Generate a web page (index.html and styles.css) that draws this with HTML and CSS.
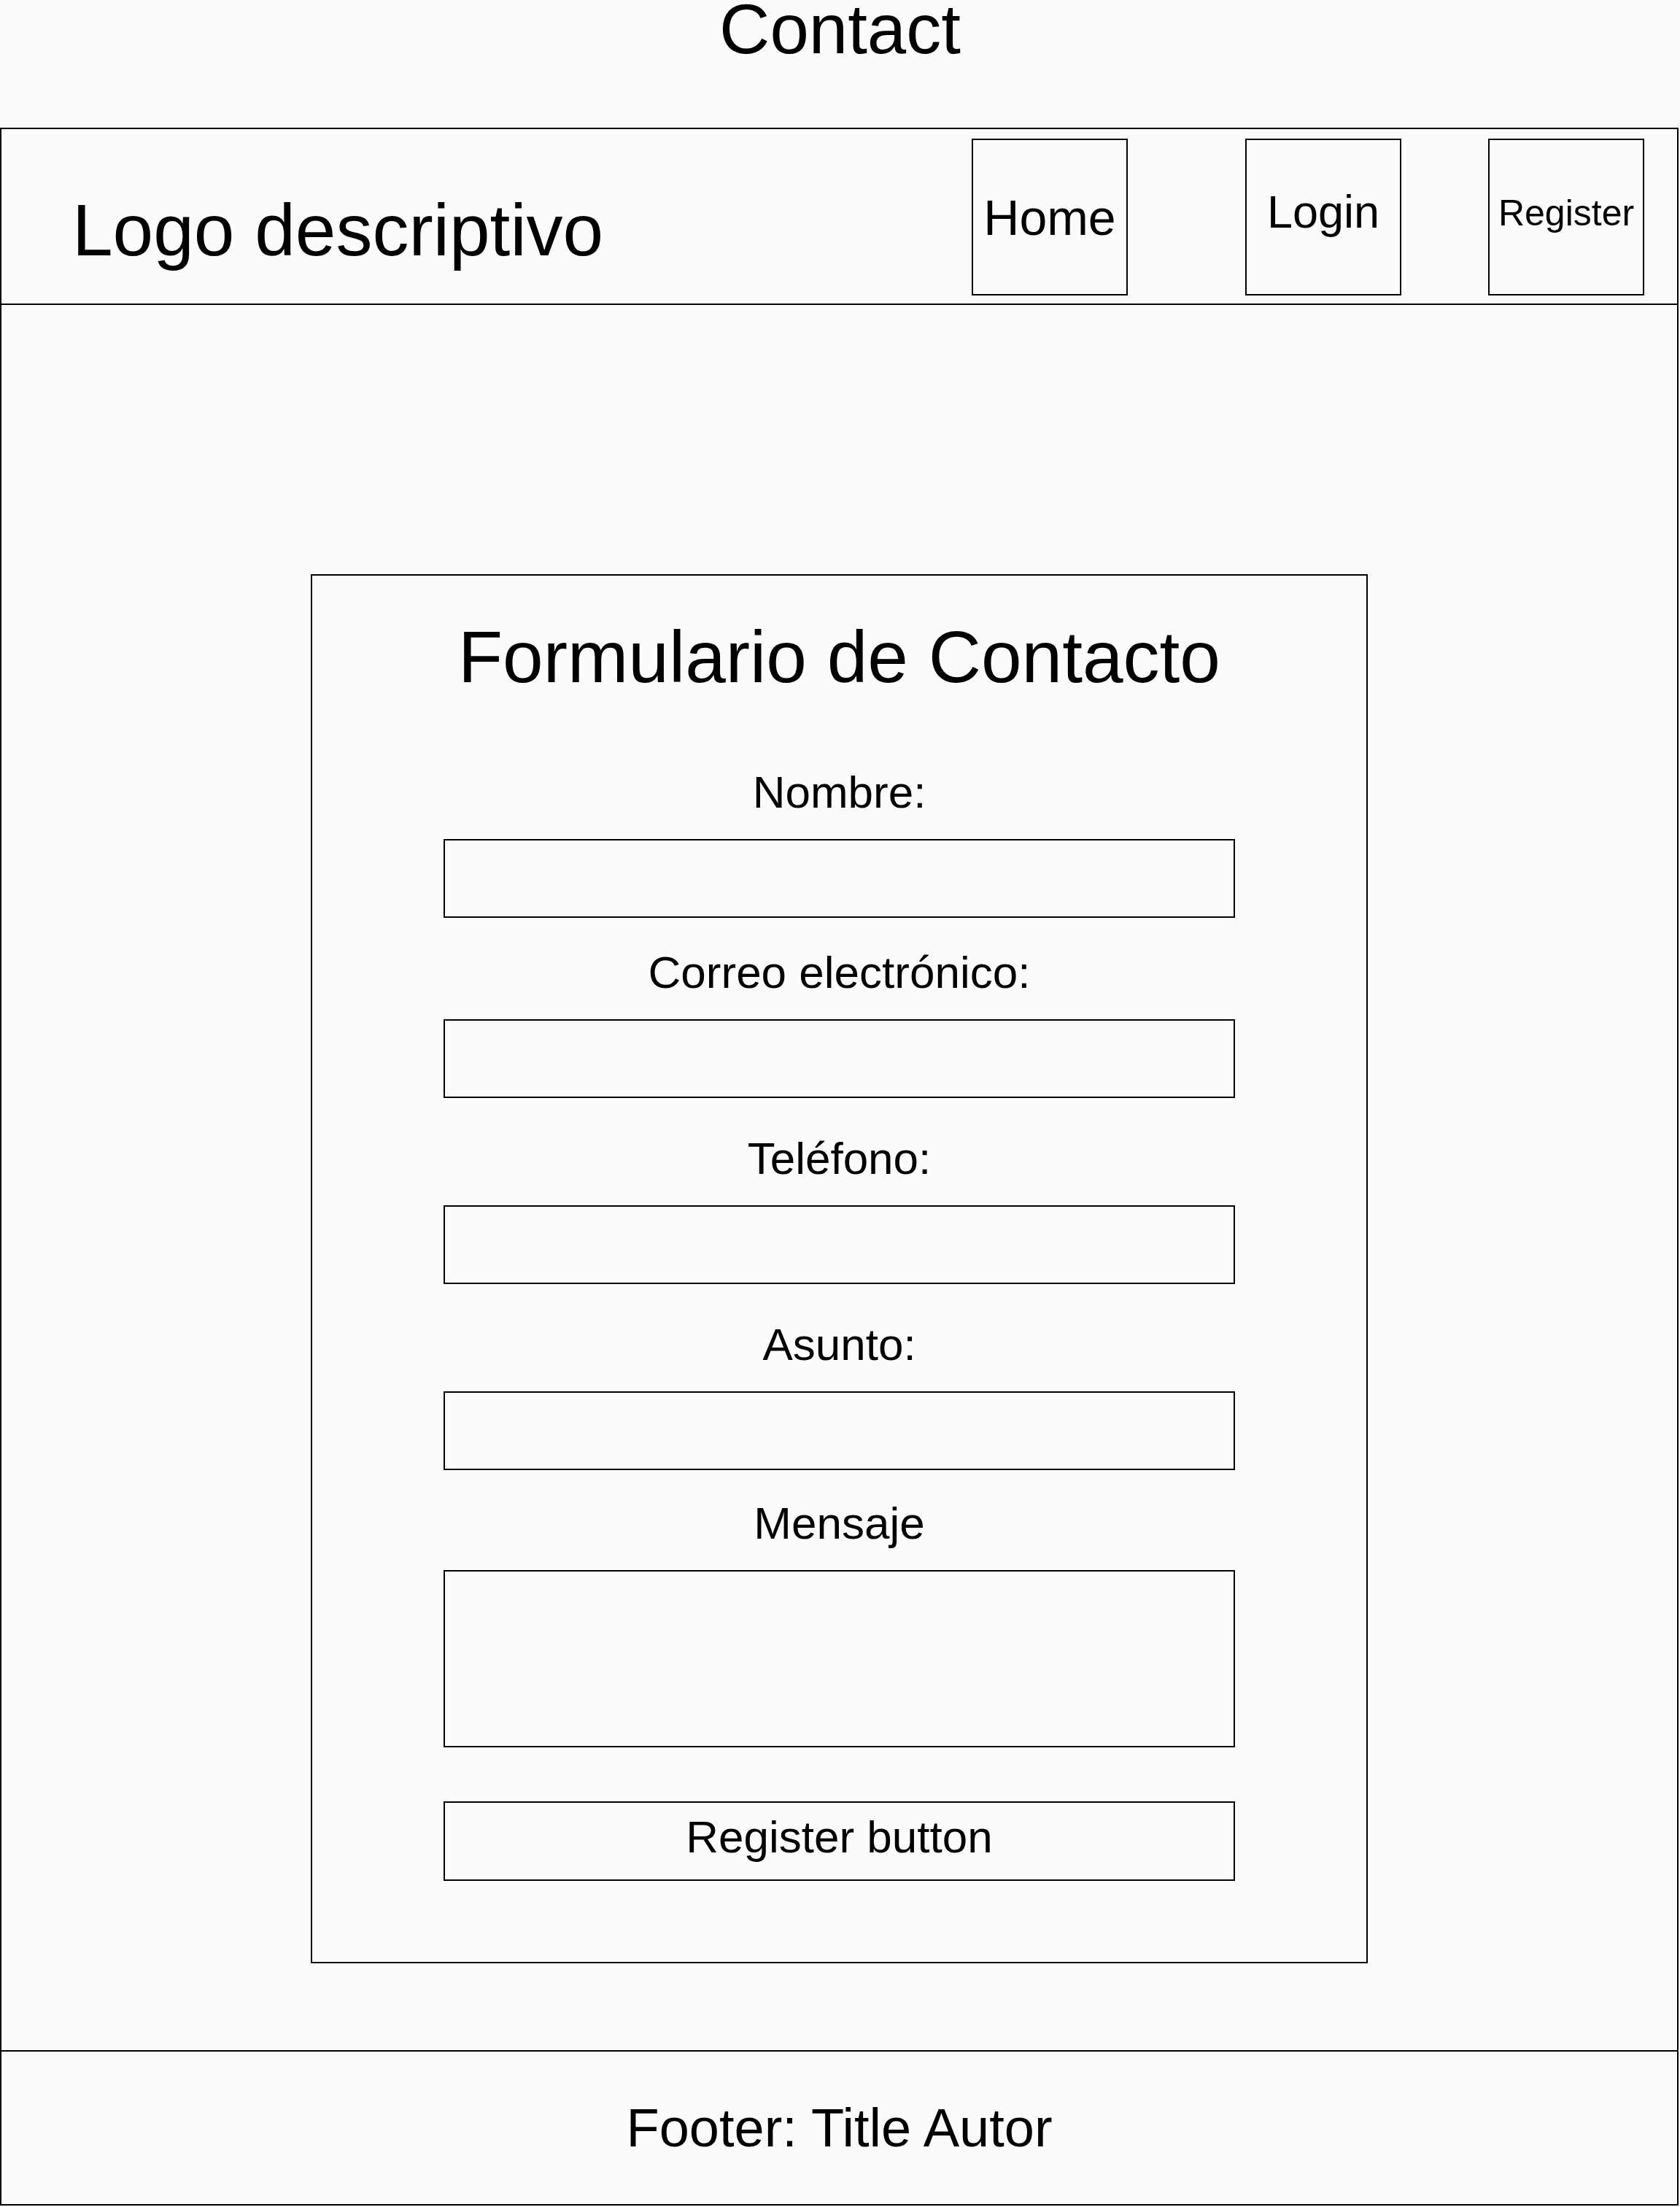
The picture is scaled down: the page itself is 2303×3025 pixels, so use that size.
FILE: index.html
```html
<!DOCTYPE html>
<html lang="es">
<head>
<meta charset="utf-8">
<title>Contact</title>
<link rel="stylesheet" href="styles.css">
</head>
<body>
<h1 class="site-title">Contact</h1>
<div class="frame">
  <header class="topbar">
    <div class="logo">Logo descriptivo</div>
    <nav class="nav">
      <a class="nav-item nav-home" href="#">Home</a>
      <a class="nav-item nav-login" href="#">Login</a>
      <a class="nav-item nav-register" href="#">Register</a>
    </nav>
  </header>
  <main class="main">
    <form class="contact-form">
      <h2 class="form-title">Formulario de Contacto</h2>
      <label class="field-label" for="nombre">Nombre:</label>
      <input class="field-input" id="nombre" type="text">
      <label class="field-label" for="correo">Correo electrónico:</label>
      <input class="field-input field-input--wide-gap" id="correo" type="email">
      <label class="field-label" for="telefono">Teléfono:</label>
      <input class="field-input field-input--wide-gap" id="telefono" type="tel">
      <label class="field-label" for="asunto">Asunto:</label>
      <input class="field-input field-input--narrow-gap" id="asunto" type="text">
      <label class="field-label" for="mensaje">Mensaje</label>
      <textarea class="field-input field-textarea" id="mensaje"></textarea>
      <button class="submit-btn" type="button">Register button</button>
    </form>
  </main>
  <footer class="footer">Footer: Title Autor</footer>
</div>
</body>
</html>
```
FILE: styles.css
```css
* {
  box-sizing: border-box;
}

html, body {
  margin: 0;
  padding: 0;
  background: #fbfbfb;
  color: #000;
  font-family: "Liberation Sans", Arial, sans-serif;
}

.site-title {
  margin: 0;
  height: 175px;
  font-size: 96px;
  font-weight: normal;
  line-height: 80px;
  text-align: center;
}

.frame {
  width: 2301px;
  border: 2px solid #000;
  display: flex;
  flex-direction: column;
}

.topbar {
  height: 241px;
  border-bottom: 2px solid #000;
  display: flex;
  align-items: flex-start;
  padding: 13px 45px 0 97px;
}

.logo {
  font-size: 100px;
  line-height: 100px;
  margin-top: 75px;
  white-space: nowrap;
}

.nav {
  margin-left: auto;
  display: flex;
}

.nav-item {
  width: 214px;
  height: 215px;
  border: 2px solid #000;
  display: flex;
  align-items: center;
  justify-content: center;
  color: #000;
  text-decoration: none;
  line-height: 1;
}

.nav-home {
  font-size: 68px;
}

.nav-login {
  font-size: 63px;
  margin-left: 161px;
  padding-bottom: 14px;
}

.nav-register {
  font-size: 50px;
  margin-left: 119px;
  padding-bottom: 12px;
}

.main {
  height: 2392px;
  padding-top: 369px;
}

.contact-form {
  width: 1449px;
  margin: 0 auto;
  border: 2px solid #000;
  padding: 61px 0 111px;
  display: flex;
  flex-direction: column;
  align-items: center;
}

.form-title {
  margin: 0 0 105px;
  font-size: 100px;
  font-weight: normal;
  line-height: 100px;
}

.field-label {
  font-size: 62px;
  line-height: 62px;
  margin-bottom: 33px;
}

.field-input {
  display: block;
  width: 1085px;
  height: 108px;
  margin: 0 0 44px;
  border: 2px solid #000;
  background: transparent;
  font: inherit;
  padding: 0;
  outline: none;
}

.field-input--wide-gap {
  margin-bottom: 52px;
}

.field-input--narrow-gap {
  margin-bottom: 42px;
}

.field-textarea {
  height: 243px;
  margin-bottom: 74px;
  resize: none;
}

.submit-btn {
  width: 1085px;
  height: 109px;
  border: 2px solid #000;
  background: transparent;
  font-family: inherit;
  font-size: 62px;
  line-height: 62px;
  color: #000;
  padding: 0 0 12px;
}

.footer {
  height: 211px;
  border-top: 2px solid #000;
  display: flex;
  align-items: center;
  justify-content: center;
  font-size: 74px;
  line-height: 1;
}
```
